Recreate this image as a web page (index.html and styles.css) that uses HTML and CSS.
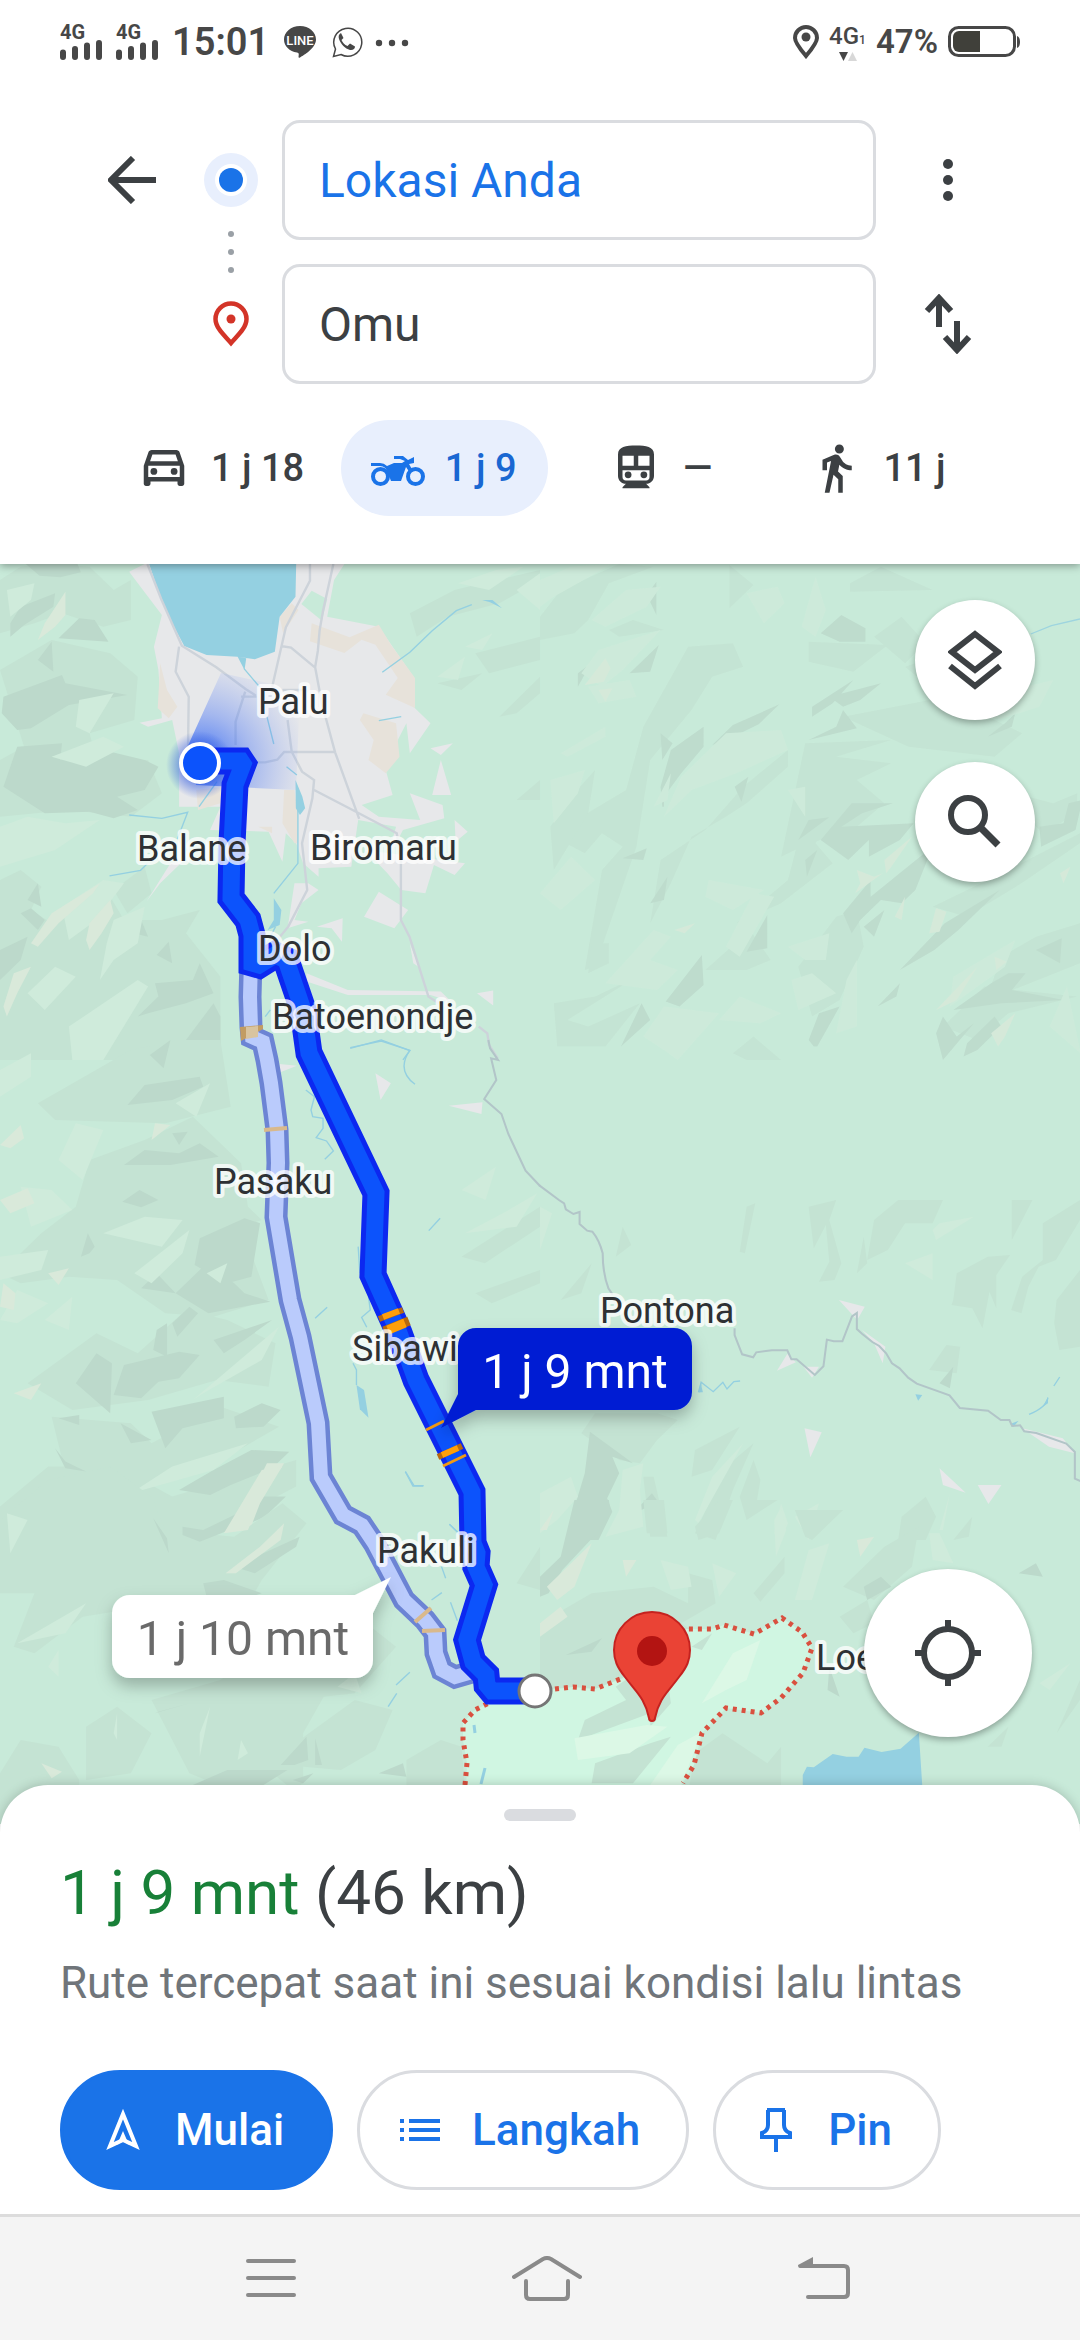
FILE: index.html
```
<!DOCTYPE html>
<html lang="id">
<head>
  <meta charset="UTF-8">
  <meta name="viewport" content="width=device-width, initial-scale=1.0">
  <title>Rute ke Omu</title>
  <link rel="stylesheet" href="styles.css">
</head>
<body>
  <!-- Status bar -->
  <div class="status-bar">
    <div class="status-group">
      <div class="signal">
        <span>4G</span>
        <svg width="44" height="20" viewBox="0 0 44 20"><path d="M3 12.500v4.500M15 9v8M27 5.500v11.500M39 3v14"/></svg>
      </div>
      <div class="signal">
        <span>4G</span>
        <svg width="44" height="20" viewBox="0 0 44 20"><path d="M3 12.500v4.500M15 9v8M27 5.500v11.500M39 3v14"/></svg>
      </div>
      <span class="clock">15:01</span>
      <svg class="app-icon" width="32" height="32" viewBox="0 0 32 32">
        <path fill="#474747" d="M16 0C7 0 0 6 0 13.500c0 6.500 5.500 12 13 13 2 .4 2 1.200 1.500 4.500 0 .6.500 1 1.500.5C20 29 32 22 32 13.500 32 6 25 0 16 0z"/>
        <text class="line-text" x="16" y="19" text-anchor="middle">LINE</text>
      </svg>
      <svg class="app-icon" width="32" height="32" viewBox="0 0 32 32">
        <path fill="none" stroke="#474747" stroke-width="1.500" d="M2.500 30.500l2-7.500A14 14 0 1 1 10 28.500z"/>
        <path fill="#474747" d="M10 7c-2 1-3 3-2 6 2 5.500 6 9.500 11 11 3 .5 5-1 5-3.500l-5-3-2.500 2.500c-3-1-5-3.500-6-6l2-2z"/>
      </svg>
      <svg width="34" height="32" viewBox="0 0 34 32" fill="#474747"><circle cx="4" cy="17" r="3.200"/><circle cx="17" cy="17" r="3.200"/><circle cx="30" cy="17" r="3.200"/></svg>
    </div>
    <div class="status-group status-right">
      <svg width="26" height="34" viewBox="0 0 26 34"><path fill="none" stroke="#474747" stroke-width="4" d="M13 31C8 25 2 18 2 13a11 11 0 0 1 22 0c0 5-6 12-11 18z"/><circle cx="13" cy="12" r="4.500" fill="#474747"/></svg>
      <div class="network">
        <span>4G<small>1</small></span>
        <svg width="20" height="9" viewBox="0 0 20 9"><path fill="#474747" d="M1 0h9L5.500 9z"/><path fill="#d8d8d8" d="M10 9h9L14.500 0z"/></svg>
      </div>
      <span class="battery-text">47%</span>
      <svg width="72" height="32" viewBox="0 0 72 32"><rect x="1.500" y="1.500" width="65" height="28" rx="9" fill="none" stroke="#474747" stroke-width="3"/><path fill="#40403a" d="M11 5h21v21H11a6 6 0 0 1-6-6v-9a6 6 0 0 1 6-6z"/><path fill="#474747" d="M69 10q3 1 3 6t-3 6z"/></svg>
    </div>
  </div>

  <!-- Directions header -->
  <header class="directions">
    <div class="search-row">
      <button class="icon-btn" aria-label="Kembali">
        <svg width="48" height="48" viewBox="0 0 48 48"><path class="stroke" d="M48 24H4M25 2L3 24l22 22"/></svg>
      </button>
      <div class="route-fields">
        <svg width="54" height="264" viewBox="0 0 54 264">
          <circle cx="27" cy="60" r="27" fill="#e8effd"/>
          <circle cx="27" cy="60" r="16" fill="#fff"/>
          <circle cx="27" cy="60" r="12" fill="#1a73e8"/>
          <g fill="#9aa0a6"><circle cx="27" cy="114" r="3"/><circle cx="27" cy="132" r="3"/><circle cx="27" cy="150" r="3"/></g>
          <path fill="none" stroke="#d33428" stroke-width="4.500" d="M27 223c-6-7-15.500-15-15.500-24a15.500 15.500 0 0 1 31 0c0 9-9.500 17-15.500 24z"/>
          <circle cx="27" cy="199" r="4.500" fill="#d33428"/>
        </svg>
        <div class="inputs">
          <input class="place-input origin" type="text" value="Lokasi Anda" aria-label="Titik awal">
          <input class="place-input" type="text" value="Omu" aria-label="Tujuan">
        </div>
      </div>
      <div class="side-actions">
        <button class="icon-btn" aria-label="Opsi lainnya">
          <svg width="48" height="48" viewBox="0 0 48 48" fill="#3c4043"><circle cx="24" cy="8" r="5"/><circle cx="24" cy="24" r="5"/><circle cx="24" cy="40" r="5"/></svg>
        </button>
        <button class="icon-btn" aria-label="Tukar awal dan tujuan">
          <svg width="48" height="60" viewBox="0 0 48 60"><path class="stroke" d="M15 33V5M3 17L15 4l12 13M33 27v28M21 43l12 13 12-13"/></svg>
        </button>
      </div>
    </div>

    <nav class="modes">
      <button class="mode">
        <svg width="54" height="54" viewBox="0 0 24 24"><path d="M18.920 5.010C18.720 4.420 18.160 4 17.500 4h-11c-.66 0-1.210.42-1.420 1.010L3 11v8c0 .55.45 1 1 1h1c.55 0 1-.45 1-1v-1h12v1c0 .55.45 1 1 1h1c.55 0 1-.45 1-1v-8l-2.080-5.990zM6.850 6h10.290l1.040 3H5.810l1.040-3zM19 16H5v-5h14v5z"/><circle cx="7.500" cy="13.500" r="1.500"/><circle cx="16.500" cy="13.500" r="1.500"/></svg>
        <span>1 j 18</span>
      </button>
      <button class="mode active">
        <svg width="54" height="54" viewBox="0 0 54 54">
          <circle cx="9.500" cy="35.500" r="7.500" fill="none" stroke="currentColor" stroke-width="4"/>
          <circle cx="44.500" cy="35.500" r="7.500" fill="none" stroke="currentColor" stroke-width="4"/>
          <path d="M0 22h9q4 0 7 3l7-3 8 0 3-2-5-2h-6v-3h9l5 4 6-3v6l-5 1 4 7-3 2-4-6-5 14H20l-3-8q-2-7-8-7L0 25z"/>
        </svg>
        <span>1 j 9</span>
      </button>
      <button class="mode">
        <svg width="54" height="54" viewBox="0 0 24 24"><path fill-rule="evenodd" d="M12 2c-4.420 0-8 .5-8 4v9.500C4 17.430 5.570 19 7.500 19L6 20.500v.5h12v-.5L16.500 19c1.930 0 3.500-1.570 3.500-3.500V6c0-3.500-3.580-4-8-4zM6 6.500h5V11H6zM13 6.500h5V11h-5zM6 13h12v3c0 1-.6 1.500-1.500 1.500h-9C6.600 17.500 6 17 6 16z"/><circle cx="8.500" cy="15" r="1.500"/><circle cx="15.500" cy="15" r="1.500"/></svg>
        <span>—</span>
      </button>
      <button class="mode">
        <svg width="54" height="54" viewBox="0 0 24 24"><path d="M13.500 5.500c1.100 0 2-.9 2-2s-.9-2-2-2-2 .9-2 2 .9 2 2 2zM9.800 8.900L7 23h2.100l1.800-8 2.100 2v6h2v-7.500l-2.100-2 .6-3C14.800 12 16.800 13 19 13v-2c-1.900 0-3.500-1-4.300-2.400l-1-1.600c-.4-.6-1-1-1.700-1-.3 0-.5.1-.8.1L6 8.300V13h2V9.600l1.800-.7"/></svg>
        <span>11 j</span>
      </button>
    </nav>
  </header>

  <!-- Map -->
  <main class="map">
    <svg class="map-canvas" viewBox="0 564 1080 1260" preserveAspectRatio="xMidYMid slice" role="img" aria-label="Peta rute Palu ke Omu">
      <defs>
        <radialGradient id="beam" gradientUnits="userSpaceOnUse" cx="200" cy="763" r="110">
          <stop offset="0" stop-color="#0c4df5" stop-opacity=".8"/>
          <stop offset=".45" stop-color="#3f6ef5" stop-opacity=".4"/>
          <stop offset="1" stop-color="#7090f5" stop-opacity="0"/>
        </radialGradient>
        <radialGradient id="glow" gradientUnits="userSpaceOnUse" cx="200" cy="765" r="34">
          <stop offset=".5" stop-color="#2a55e0" stop-opacity=".6"/>
          <stop offset="1" stop-color="#2a55e0" stop-opacity="0"/>
        </radialGradient>
        <filter id="shadow" x="-20%" y="-30%" width="140%" height="180%">
          <feDropShadow dx="0" dy="8" stdDeviation="8" flood-color="#000" flood-opacity=".25"/>
        </filter>
      </defs>

      <rect y="500" width="1080" height="1400" fill="#c8ead9"/>

      <!-- relief, north west -->
      <g transform="translate(0 560) scale(.3444 .3333)">
        <path class="t-mid" d="M0 60L60 20 140 10 260 20 330 90 380 60 380 180 300 200 180 160 100 190 0 220zM0 330L150 240 320 280 400 350 390 480 260 520 280 600 430 600 470 700 380 770 200 750 0 770 0 600 70 560zM0 960L60 930 120 980 90 1050 150 1090 320 1010 360 1080 470 1080 580 1050 540 1120 640 1250 640 1500 0 1500zM330 990L420 920 440 1000 370 1060z"/>
        <path class="t-dark" d="M75 12h150l10 25-60 15-60-5zM30 190L60 140 160 100 155 140 70 195 30 230zM170 235L230 175 275 180 315 245zM110 300L150 245 155 335zM5 460L10 410 180 345 190 370 370 405 200 435 90 505 50 510zM10 680L50 560 180 550 175 600 260 560 420 600 460 620 420 690 340 710 400 750 330 775 260 755 130 760zM80 1020L110 970 120 1040zM60 1060L90 1045 130 1080 110 1110zM0 1170L80 1130 60 1200 0 1260zM345 1095L410 1080 430 1130 370 1115zM455 1185L490 1145 500 1210zM400 1370L460 1310 450 1270 560 1260 580 1210 620 1300 540 1330 430 1360zM540 1440L620 1330 640 1370 640 1500 500 1500z"/>
        <path class="t-light" d="M20 90L100 70 90 120 30 170zM230 420L330 400 260 520 220 500zM150 590L300 530 360 560 250 620zM0 800L80 770 190 790 290 780 160 870 0 920zM180 1040L300 960 360 970 280 1080 200 1140zM330 1080L420 1040 400 1150 330 1200 290 1260 310 1150zM80 1300L160 1220 220 1250 130 1350zM200 1400L400 1260 430 1280 300 1500 210 1500z"/>
        <path class="t-sand" d="M110 240L130 190 190 95 190 165 160 200zM90 1150L150 1060 290 970 270 1000 170 1090 110 1160zM250 1140L260 1090 320 1020 330 1060 295 1120 260 1170zM10 1340L40 1240 90 1220 50 1300 20 1370z"/>
        <path class="t-mid" d="M1190 160L1320 90 1400 70 1568 30 1568 60 1450 130 1300 170 1210 230zM1380 280L1568 230 1568 300 1420 340zM1270 370L1400 340 1340 390zM1450 470L1568 350 1568 400 1500 460zM1500 720L1568 660 1568 720z"/>
        <path class="t-light" d="M1330 70L1440 30 1520 20 1420 90zM1350 260L1430 220 1400 270zM1270 350L1350 290 1330 360zM1500 90L1568 40 1568 150z"/>
      </g>

      <!-- Palu urban area -->
      <g transform="translate(0 560) scale(.3444 .3333)">
        <path class="city" d="M375 35L420 12H1000L970 60 950 170 1100 200 1200 350 1190 430 1250 490 1190 580 1180 490 1155 540 1120 630 1140 705 1050 735 1100 770 1220 780 1190 700 1285 735 1290 775 1170 810 1120 910 1150 800 1040 780 1020 920 925 925 925 950 880 910 860 850 830 820 820 905 780 815 610 810 640 740 520 740 520 580 500 480 430 500 405 488 470 475 460 330 447 260 470 165z"/>
        <path class="city" d="M1250 565l65-15-35 35zM1280 600l30 105h-55zM1320 780l38 35-35 30zM1100 995l85 55-40 55-88-35zM1060 870l290 40-30 35-60-30-25 85-70-10-40-50zM855 970l40 0 30 20-50 40-20 50 40 5-60 20zM920 1100l75-25-2 70-30-40zM890 1240l120 50 270 5 30 30-60-20-240 0-120-40zM1385 1300l47-8v45zM1190 1150l10 60 15 10zM425 1025l70-115 40-10-70 70z"/>
        <path class="urban-sand" d="M905 190l110 42 85-38 35 60 70 100 0 90-85-40 35-50-65-100-40-15-50 40-100-35zM1055 460l95 30 10 100-40 50-50-40 15-60-40-60zM465 310l20 80 30 50-25 35-32-30zM825 690l30 0 10 70 0 90-10 0-35-60zM570 690l80-10-10 50-65 20zM750 800l40 0 0 20zM812 170l35-40 20 20-45 70z"/>
        <path fill="#c8ead9" d="M905 92l45 25-15 65-60-50z"/>
        <path class="water" d="M433 12H860L858 110 812 170 798 275 740 298 690 290 600 285 535 258 500 190 462 100zM690 290l25 5-5 35z"/>
        <path class="river" d="M708 325l45 55M775 470l20 82M832 620l30 25 M865 740v170l-35 45-35 45M630 665l-52 75M375 765l95 10 75-18-30 80M318 948l90-17 20-20M1110 337l80-60 65-65 70-60 45-18M1100 482l65-12M800 1100l-30 60M770 1370l15-20M1017 1465l90-25 83 32-20 28"/>
        <path class="water" d="M1400 120l30 0 28 25-35-18zM858 660l20 50 8 35-15 20-12-20zM795 1015l22 35-5 45-35 15 18-30zM530 790l10-10z"/>
        <path class="road" d="M428 12l40 105 60 140 100 65 85 65 30 20M520 260l-10 75 38 75-2 150M712 395l-28 90v70M900 12v50l-50 100-20 40-40 180M968 12l-30 140-10 60-5 60-8 50 20 110 38 145 70 200M815 258l30 5 70 60M835 480l12 95 30 60 35 25-5 55-30 135 15 140-55 110-40 50M740 607h30l35-8 20-23h148M912 690l130 70 110 60 12 80v180l25 50 55 180 30 20M1390 1400l25 20 5 35 25 40M700 410h45M820 390h70"/>
      </g>

      <!-- relief, north east -->
      <g transform="translate(540 560) scale(.3444 .3333)" opacity=".8">
        <path class="t-mid" d="M0 170L60 90 230 12 330 20 200 70 140 180 100 220 0 240zM200 210L270 180 360 210 230 230zM430 260l130-10 30 70-90 30-60 100-120 150-40 260-120 360-30 10 50-300 60-70-60-40-50 60-90-50 80-60 130-80 50-190zM550 15l70 60-70 70zM900 70l90-50 150 70-240 5zM780 245l230 10-100 80-130-30zM970 230l80-60 70 80-60 60zM770 550l250-10-160 50 160 20-100 50 80 70-80 70-160 60-60 30zM590 680l130-110 0 50-120 110-60 40-100 60-60 140-60 120 30-190 130-90zM570 1090l150-130 50-200 110-40-80 130 50 60-150 120zM860 1070l60-20 20 110-70 160-80 50-40-150zM1140 1040l160-80 268-140v30l-170 120-160 100zM1060 320l170-60 80 100-180 20zM880 470l300-60 220 110-80 70-250-30z"/>
        <path class="t-mid" d="M30 800l60-90 70-80-20 130-100 170zM150 1150l50 0 0 60-60 30zM40 1330l120-20 120-60-200 130 60 20 150-70-100 130-140 0zM1340 1190l100-60 128-40v120l-220 90-50 10zM560 1480l60-50 80 70-100 0zM1170 1400l120-120 270 30-200 50-90 80zM480 1230l130-120 60 90-70 30zM1380 700l110 30 70-30v60l-100 60-40-40z"/>
        <path class="t-dark" d="M310 105l28-40 0 100zM815 220l60-55 70 40 0 40h-75zM350 680l30-110 95-70 0 60-65 80-50 70v30h-5zM500 555l60-60 135-62-60 60-80 40zM790 440l120-80-60 70-60 40zM880 450l40 55-140 35 80-40zM840 410l150-40-60 50-50 20zM260 340l85-85-25 80zM110 340l38-30-38 70zM240 895l70-30-10 35zM320 1030l50-80-10 70zM600 1175l60-110 0 100zM365 1325l105-140 5 90-70 65zM235 1460l60-130 25 50zM750 840l30-60 60-8zM815 840l90-110 120 0-90 30-60 40 210-10-40 50-90 50 0-50-60 60zM880 1060l80-100 0 50 120-100 60-50-50 130-40 40-60-10-60 60-25 40zM940 1100l60-50-30 80zM1045 1230l130-140 160-100-120 120-70 60zM1440 1170l75-35-5 75zM1310 1270l50-30 50 0-40 50 150 30-180 10-140 20zM980 1340l65-70-10 40zM780 1440l30-80 60-20-65 120-10 0zM1150 1420l20-50 40 60 50-40-90 110zM1240 1450l80-80 20 30-70 70-40 20zM1300 530l50-40 30-30-10 40zM565 680l40-30-20 75zM770 900l35-30-30 80zM1450 800l70-10 15-60 40-10-20 90-100 50zM350 520l35 30-30 50z"/>
        <path class="t-light" d="M0 60L90 20 210 12 40 110 0 140zM150 180l100-90 100-10-40 60-120 60zM600 100l90-20 20 50-60 60zM760 200l40-150 30 100-30 80zM170 270l180-60-110 120-60 50-60-40zM140 380l120-20 20 50-110 20zM540 520l160-10 20 60-150 70-130 50-80 80 50-120zM60 580l130-80 0 30-110 60zM30 660l100-30-20 70-70 90zM0 1000l90-110 70 70-100 90zM330 740l50-100-10 80zM490 960l160 30-90 60-80-40zM190 1270l140-160 50 20-60 70 80 30-60 60zM620 1000l60 10-100 180-40-30zM720 1160l120-40-10 80-60 0zM730 1260l60-20 70 60-110 50zM520 1380l60-70 120 50-60 30zM300 1430l60-90 160 20-120 140-40-30zM1200 1250l180-110-30 80-160 120zM720 690l50-10 0 90zM890 1260l30-60 0 200-60 20zM1330 400l160-40-40 80-120 40zM1290 480l30-70 40 60zM1480 1400l50-120 40 200z"/>
        <path class="t-sand" d="M130 375l60-80 15 30-20 40zM170 390l40-5-20 40zM920 930l10 40-15 30 80-60-25 10zM1000 900l80-70-60 90-15 20zM1030 1070l30-60-10 70zM1130 1120l20-75 30 10-20 60zM1320 1190l35 15-30 25zM1150 1350l120-130-60 100zM1310 1420l70-60-30 70-20 30zM1510 940l30-20-20 50zM390 1110l60-20-30 30z"/>
        <path class="river" d="M1425 222l60-25 83-20"/>
      </g>

      <!-- relief, west -->
      <g transform="translate(0 1040) scale(.3444 .3333)">
        <path class="t-mid" d="M110 190L380 30 520 0 640 0 670 200 480 250 160 240zM0 700L120 580 220 500 260 360 420 300 560 230 700 370 720 500 760 540 700 560 780 780 620 830 480 820 340 720 200 710 60 730zM80 1030l200-150 120 60 140-130 120 30 140 70-20 130-150-20-200 60-220 30zM150 1130l230 20 60 60 200-110 170 60-200 120-180 60-230 0zM0 1400l140-120 200 0 160 90 360-110 0 80-300 160-560 0z"/>
        <path class="t-dark" d="M370 195l50-60 160-25 10 30-90 40zM435 45l60-45-20 85zM360 375l60-45 100 10 60-30 55 40-140 25zM500 280l45-5-25 40zM355 485l50-35 55 30-50 22zM235 650l20-70 20 40-15 20zM565 675l15-80 130-60 45 15-25 160-70 20zM410 745l45-45 55 60zM510 760l90-90 80 60 30 30 75 25-180 35zM220 1030l60-90 45 30-5 150zM330 1065l30-90 160-40 60 10-60 70-60 10-50 50zM440 1115l210-45 0 65-120 30-50 60zM350 1150l90 50-60 10zM170 1135l60-10 0 30zM680 1130l80-40 55 20-50 50-80 5zM160 1225l30 40 60 30-60-10zM455 870l30-20 0 100-40-20zM500 850l50-50 25 20-60 70zM620 900l170-60-80 60-60 40zM520 1350l100-60 110-60 110 5-50 50-120 50-60 30zM660 1450l100-80 70 0-60 60-90 40z"/>
        <path class="t-light" d="M0 90l90-50 0 70-90 60zM170 360l50-110 80 20-60 150zM60 440l90 10 60 60-120 50zM300 580l120-50 110 10-60 80zM390 700l160-130-20 70-90 90zM0 650l140-20-20 60-120 30zM130 840l80-70-10 100zM600 700l60-30-20 60zM560 1080l250-220-50 100-170 100zM380 1360l120-80 220-70-100 80zM510 190l100-60-40 100zM0 840l50-90 90 40-90 60zM240 1380l70-60 40 100-60 20z"/>
        <path class="t-sand" d="M0 315l60-60 10 40-40 30zM440 300l10-50 45 5zM0 480l80-35 20 45-70 30zM0 800l10-70 35 30-5 50zM40 1060l80-30-30 50zM140 700l60-15-30 50zM685 1460l90-190 50 0-70 120-30 80zM335 1380l15-60 5 80-10 20zM760 1500l60-90-20 80z"/>
        <path class="t-mid" d="M1340 650l228-150 0 60-160 110zM1380 760l188-70v40l-140 60z"/>
        <path class="t-light" d="M1350 580l110-60 100-60-60 100zM1340 450l100-70-30 100z"/>
        <path class="city" d="M812 72l50 5-48 20zM1090 100l45 30-30 50zM1303 197l98-10-3 35z"/>
        <path class="river" d="M1017 23l90-20 83 28q-40 60 15 102M888 150l25 20-10 40 5 20 30 5v30l-20 28 30 10 20 30-25 25M1245 572l33-37M915 835l35-33M1040 620l5 80M1070 770l5 40-25 22 15 30M1025 970l10 20v45M1177 1295l25 42h28M1305 1453l30 30"/>
        <path class="water" d="M1035 1035l22 15 13 83-25-25z"/>
        <path class="road-thin" d="M1418 0l5 25 23 35-20-5 15 65-35 57 50 45 20 60 50 110 42 46"/>
      </g>

      <!-- relief, east -->
      <g transform="translate(540 1200) scale(.3444 .3333)">
        <path class="t-mid" d="M600 20l25-10-30 150-15-5zM780 20l80-20-20 60 35 130-20 50-45 5 30-60-10-110-35 70zM970 60l70-60 130 0-30 70-80 0-50 80-60 30zM1200 300l10-80 90-50 65-5-40 60 0 100-20-50-20 110-30-60-60-10zM1400 230l60-50 0-110 108-70v60l-70 120-50 20-30 60-20 80-30-10zM920 220l20-110 10 80zM1500 300l68-90v230l-60 10-15-80zM220 170l20-90 25 55zM1370 0l60 0-60 120zM120 700l40-60 180 0 60 20-60 60-50 70-60-10zM450 750l130-70-80 130-60 20zM450 1000l90-200 80-70-60 140-50 150zM580 890l40-110 20 60-10 60 60 0-90 60zM60 300l90-110-30 90zM1130 510l50-75 40 5-10 80zM1050 950l70-60 30 60-30 70h-80zM300 830l30 0 40 180h-50z"/>
        <path class="t-dark" d="M145 695l125 95-60-20 20 50-35 75 15 40-40 85h-70l-2-90 32-110zM265 945l60-65 18 25zM1160 550l40-50-10 65z"/>
        <path class="t-light" d="M0 20l35 20-35 110zM1160 70l100-20-110 70-10-30zM1060 190l80-30 0 80zM240 810l60-20-10 80 10 110-110 30 40-80zM500 830l90-100-130 240-10-10zM680 1000l20-90 20 60-20 50zM740 950l70-40-30 110zM0 880l90-50 20 60-60 70-50 40zM1160 990l30-110-20 110z"/>
        <path class="city" d="M868 300l75 20-22 40zM935 390l68 50-8 50-25-60zM688 512l30-50 25 25zM765 500l45 0-20 33zM768 685l50 12-33 75zM1160 805l76 73-66-23zM1271 855h69l-38 57zM1400 685l118 30 35 45-75-20z"/>
        <path class="river" d="M463 577l5-30 35 28 28-28 12 20 20-22 18-2M1420 643q50-20 55-50M1492 558l17-27"/>
        <path class="water" d="M1090 583l20 2-12 17zM1365 672l25-10-15 18zM458 577l8-30 7 30zM1460 620l15-30v20z"/>
        <path class="road-thin" d="M-2-44L55 0l15 10 5 18 22 14 18-6v36l22 20 15 3q20 25 30 65 0 60 17 106l12 18M565 385v20l22 58 32 9 9-15 45-6h45l12 27h15l53 47 25-26 10-80 20 5h25l28-75 14-10v48l15 14 30 25 20 12 20 22 17 30 22 15 25 28 25 18 95 35 30 38 82 8 37 28h25l8 18 23-2 12 18 35 5 87 32 25 25v80l18 8"/>
      </g>

      <!-- relief, south west -->
      <g transform="translate(0 1440) scale(.3444 .3333)">
        <path class="t-mid" d="M0 240l140-120 180-40 120 90 40 100 200 20 140-100 70 60-130 170-60 110-200 30-80-60-180 30-140 110-60-20 60-160-100 0zM440 780l200-60 150-110 250-80 110 90-120 140-90 10-60 110 0 150-30 20-70-60-110 60-120-50-60-120zM870 900l160-120 110 30-50 120-100 60-110-10zM250 860l90-60 100 80-60 120-130 20zM0 1000l60-100 110 20 60 100 0 60-230 100zM1180 960l100-60 60 20 10 120h-170zM1500 430l68-110 0 130z"/>
        <path class="t-dark" d="M445 235l40 60 5 45zM530 260l60 10 120-60-20 50-110 45-50-20zM680 380l190-90-10 30-120 80zM590 430l60-10 110 40-60 20-100-10zM815 975l75-85 5 70-40 15zM915 975l0-80 20 80zM560 1035l100-45h175l-70 45zM850 1020l60-20-30 30zM1100 1000l70-30 10 40zM450 820l100-30-90 25z"/>
        <path class="t-light" d="M20 220l60 20-50 100zM50 610l200-120-60 90zM140 680l30-50 0 80zM580 880l30-80-30 150zM690 960l10-60 20 40zM330 880l10-60 0 80zM980 740l50-40 20 60z"/>
        <path class="t-sand" d="M650 280l110-190 60-10-50 60-50 130zM655 400l100-80 70-70-10 50-130 100zM120 970l60 25-30 20z"/>
        <path class="river" d="M1177 95l22 43h30M1305 253l35 35M1282 380l12 35M1253 480l30-22M1308 487l20 55M1150 735l40-38M1127 800l25-40"/>
      </g>

      <!-- relief, south east -->
      <g transform="translate(540 1500) scale(.3444 .3333)">
        <path class="t-mid" d="M0 370l150-90 180-20 100 50 0-90 70 20 10 70-100 60 150 100-120 90-250 20-190-20zM620 280l90-110 0 50-70 85zM880 260l120-120 100-60-20 120-110 100zM740 30l140 0-90 90-20-10zM450 760l80-60 130 90 40-50 0 140h-270zM870 350l80-50 20 70-60 30zM1200 120l55-70-10 60zM1300 740l60-60-20 60zM1500 700l68-160v60zM300 0l60 0 10 100-60 0zM450 80l70-80 40 0-40 100-60 20z"/>
        <path class="t-dark" d="M100 0h100l5 40-40 60-100 110-40 70-25 10V230l60-60zM75 465l105-50-30 40zM940 260l50-30 30 30-70 40zM1390 220l50-30 20 40zM840 500l30 90-35-20z"/>
        <path class="t-sand" d="M20 260l130-130-50 130-50 40zM0 370l60-50 20 30-80 60zM920 120l50-10-40 60zM240 180l40 0-30 50zM0 90l40-60-20 60z"/>
        <path class="t-light" d="M350 180l80 20 10 60-60 10zM680 60l20-40 15 70-30 80zM780 150l60-20-50 170-50 0zM500 190l70 30-50 70zM1130 100l30 0 40 90-60-10zM1450 550l90-60-60 80z"/>
      </g>

      <!-- Omu boundary -->
      <path fill="#d0f6e2" d="M489 1703l-14 7-12 13v17l4 23-2 61h200l18-41 11-18 8-32 24-25 35 5 20-15 22-25 9-25-10-16-20-14-28 16-30-9-12 4-26 0-15 20-48 29-28 11-22-2-18 2-40 6z"/>
      <g transform="translate(540 1500) scale(.3444 .3333)">
        <path class="t-mid" d="M320 680l60-70-10-80-80-20-70 50 30 40-120 60-20 60 210-80zM160 790l160-60 60-20-110 140h-120zM440 440l60-40-30 50z"/>
        <path fill="#dcf8e6" d="M100 715l210-40 60 5-110 80-150 20zM470 610l90-150 80-40-40 120-60 30zM320 855l80-120 70-40-60 160z"/>
        <path class="water" d="M763 855v-30l12-25 20 2 55-40 40 8 35 0 17-27 50 13 55-10 53-48 10 160z"/>
      </g>
      <path class="boundary" d="M465 1785l2-22-4-23v-17l12-13 14-7M555 1689l18-2 22 2 28-11 63-49h26l12-4 30 9 28-16 20 14 10 16-9 25-22 25-20 15-35-5-24 25-8 32-11 18"/>
      <path class="river-abs" d="M485 1768l-4 16M474 1725l1 8"/>

      <!-- location beam -->
      <path fill="url(#beam)" d="M186 750L221 673 300 690 296 790 196 785z"/>
      <circle cx="200" cy="765" r="34" fill="url(#glow)"/>

      <!-- alternative route -->
      <path class="alt-edge" d="M251 960L250 997 251 1027 252 1037 263 1042 267 1060 271 1083 277 1130 278 1163 276 1217 290 1300 300 1337 318 1423 321 1477 343 1515 362 1525 374 1543 404 1600 425 1620 435 1633 436 1653 442 1670 455 1677 472 1672"/>
      <path class="alt-fill" d="M251 960L250 997 251 1027 252 1037 263 1042 267 1060 271 1083 277 1130 278 1163 276 1217 290 1300 300 1337 318 1423 321 1477 343 1515 362 1525 374 1543 404 1600 425 1620 435 1633 436 1653 442 1670 455 1677 472 1672"/>
      <path fill="#c29c62" d="M240 1027l23-2v4l-22 12z"/>
      <path fill="#d9c49f" d="M246 1027l12-1v11l-12 2z"/>
      <path stroke="#d9b98c" stroke-width="4" d="M264 1130l23-2M415 1622l16-14M422 1631l23-1"/>

      <!-- main route -->
      <path class="route-edge" d="M200 761H241L243 764 235 785 232 843 231 898 248 920 252 935 252 963 259 965 275 955 286 960 303 1010 309 1053 376 1193 373 1275 399 1333 416 1380 472 1492 473 1543 477 1553 476 1567 484 1585 467 1640 473 1662 486 1675 487 1685 492 1691H535"/>
      <path class="route-fill" d="M200 761H241L243 764 235 785 232 843 231 898 248 920 252 935 252 963 259 965 275 955 286 960 303 1010 309 1053 376 1193 373 1275 399 1333 416 1380 472 1492 473 1543 477 1553 476 1567 484 1585 467 1640 473 1662 486 1675 487 1685 492 1691H535"/>
      <path stroke="#b8690f" stroke-width="6" d="M379 1319l24-9M438 1457l24-11"/>
      <path stroke="#b8690f" stroke-width="9" d="M384 1331l25-10"/>
      <path stroke="#ff9f0a" stroke-width="6" d="M383 1317l16-6M442 1455l16-7"/>
      <path stroke="#ff9f0a" stroke-width="9" d="M388 1330l17-7"/>
      <path stroke="#f09a14" stroke-width="3" d="M426 1430l18-9M443 1466l23-11"/>

      <circle cx="200" cy="763" r="19" fill="#0c53fc" stroke="#fff" stroke-width="4"/>
      <circle cx="535" cy="1691" r="16" fill="#fff" stroke="#757575" stroke-width="3"/>

      <!-- destination pin -->
      <path fill="#ea4335" stroke="#c5221f" stroke-width="2" d="M652 1721c-2 0-3-1-3-3-4-20-13-26-24-41-8-10-11-17-11-27a38 38 0 0 1 76 0c0 10-3 17-11 27-11 15-20 21-24 41 0 2-1 3-3 3z"/>
      <circle cx="652" cy="1651" r="15" fill="#b31412"/>

      <!-- place names -->
      <g class="place">
        <text x="258" y="714">Palu</text>
        <text x="137" y="861">Balane</text>
        <text x="310" y="860">Biromaru</text>
        <text x="258" y="961">Dolo</text>
        <text x="272" y="1029">Batoenondje</text>
        <text x="214" y="1194">Pasaku</text>
        <text x="352" y="1361">Sibawi</text>
        <text x="600" y="1323">Pontona</text>
        <text x="377" y="1563">Pakuli</text>
        <text x="816" y="1670">Loe</text>
      </g>

      <!-- travel time callouts -->
      <g class="callout callout-main" filter="url(#shadow)">
        <path d="M476 1328H674a18 18 0 0 1 18 18V1392a18 18 0 0 1-18 18H476L441 1428 458 1394V1346a18 18 0 0 1 18-18z"/>
        <text x="575" y="1388" text-anchor="middle">1 j 9 mnt</text>
      </g>
      <g class="callout callout-alt" filter="url(#shadow)">
        <path d="M130 1595H355L391 1577 373 1613V1660a18 18 0 0 1-18 18H130a18 18 0 0 1-18-18V1613a18 18 0 0 1 18-18z"/>
        <text x="243" y="1655" text-anchor="middle">1 j 10 mnt</text>
      </g>
    </svg>

    <div class="map-tools">
      <button class="round-btn" aria-label="Lapisan peta">
        <svg width="54" height="60" viewBox="0 0 54 60"><path class="stroke" d="M27 4L50 22 27 40 4 22zM2 36l25 20 25-20"/></svg>
      </button>
      <button class="round-btn" aria-label="Telusuri di sepanjang rute">
        <svg width="54" height="54" viewBox="0 0 54 54"><circle class="stroke" cx="20" cy="20" r="17"/><path class="stroke stroke-thick" d="M33 33l17 17"/></svg>
      </button>
    </div>
    <button class="round-btn recenter" aria-label="Lokasi saya">
      <svg width="66" height="66" viewBox="0 0 66 66"><circle class="stroke" cx="33" cy="33" r="24"/><path class="stroke" d="M33 0v10M33 56v10M0 33h10M56 33h10"/></svg>
    </button>
  </main>

  <!-- Bottom sheet -->
  <section class="sheet">
    <div class="handle"></div>
    <h1 class="summary"><span>1 j 9 mnt</span> (46 km)</h1>
    <p class="note">Rute tercepat saat ini sesuai kondisi lalu lintas</p>
    <div class="actions">
      <button class="pill pill-primary">
        <svg width="54" height="54" viewBox="0 0 54 54"><path fill="none" stroke="currentColor" stroke-width="4" d="M27 11L14 43l13-6 13 6z"/><path fill="currentColor" d="M27 28l6 14-6-4-6 4z"/></svg>
        Mulai
      </button>
      <button class="pill">
        <svg width="54" height="54" viewBox="0 0 54 54"><path fill="none" stroke="currentColor" stroke-width="4" d="M16 18h31M16 27h31M16 36h31M7 18h4M7 27h4M7 36h4"/></svg>
        Langkah
      </button>
      <button class="pill">
        <svg width="54" height="54" viewBox="0 0 54 54"><path fill="none" stroke="currentColor" stroke-width="4" d="M18 7h18M19 7v15q0 6-6 8v4h28v-4q-6-2-6-8V7M27 34v15"/></svg>
        Pin
      </button>
    </div>
  </section>

  <!-- System navigation -->
  <nav class="system-nav">
    <button aria-label="Menu"><svg width="50" height="42" viewBox="0 0 50 42"><path d="M2 3h46M2 20h46M2 37h46"/></svg></button>
    <button aria-label="Beranda"><svg width="70" height="46" viewBox="0 0 70 46"><path d="M2 21L31 3q4-2 8 0l29 18M14 25v14q0 4 4 4h34q4 0 4-4V25"/></svg></button>
    <button aria-label="Kembali"><svg width="52" height="44" viewBox="0 0 52 44"><path d="M10 9h36q4 0 4 4v23q0 4-4 4H10"/><path class="nav-tip" d="M0 8L15 0v11H2q-2 0-2-3z"/></svg></button>
  </nav>
</body>
</html>
```

FILE: styles.css
```
* {
  box-sizing: border-box;
}
body {
  margin: 0;
  min-height: 100vh;
  display: flex;
  flex-direction: column;
  font-family: Roboto, "Noto Sans", sans-serif;
  color: #3c4043;
  background-color: #fff;
}
button {
  border: none;
  background: none;
  padding: 0;
  font-family: inherit;
  color: inherit;
  cursor: pointer;
}
svg {
  display: block;
  flex-shrink: 0;
}
.stroke {
  fill: none;
  stroke: #3c4043;
  stroke-width: 6;
}
.stroke-thick {
  stroke-width: 7;
}

/* Status bar */
.status-bar {
  position: relative;
  z-index: 2;
  display: flex;
  justify-content: space-between;
  align-items: center;
  height: 84px;
  padding: 0 60px;
  color: #474747;
  background-color: #fff;
}
.status-group {
  display: flex;
  align-items: center;
  gap: 12px;
}
.status-right {
  gap: 10px;
}
.signal span {
  display: block;
  font-size: 20px;
  line-height: 16px;
  font-weight: 700;
}
.signal path {
  stroke: #474747;
  stroke-width: 6;
  stroke-linecap: round;
}
.clock {
  font-size: 38px;
  line-height: 48px;
  font-weight: 600;
}
.app-icon {
  margin-left: 3px;
}
.line-text {
  font-size: 13px;
  font-weight: 500;
  fill: #fff;
}
.network {
  display: flex;
  flex-direction: column;
  align-items: center;
}
.network span {
  font-size: 24px;
  line-height: 24px;
  font-weight: 500;
}
.network small {
  font-size: 12px;
}
.battery-text {
  font-size: 33px;
  line-height: 40px;
  font-weight: 600;
}

/* Directions header */
.directions {
  position: relative;
  z-index: 1;
  padding: 36px 0 48px;
  background-color: #fff;
  box-shadow: 0 2px 8px rgba(0, 0, 0, 0.35);
}
.search-row {
  display: flex;
  gap: 48px;
  padding: 0 108px;
}
.icon-btn {
  display: flex;
  align-items: center;
  justify-content: center;
  width: 48px;
  height: 120px;
}
.route-fields {
  display: flex;
  flex: 1;
  gap: 24px;
}
.inputs,
.side-actions {
  display: flex;
  flex-direction: column;
  gap: 24px;
}
.inputs {
  flex: 1;
}
.place-input {
  width: 100%;
  height: 120px;
  padding: 0 34px;
  border: 3px solid #dadce0;
  border-radius: 18px;
  font-family: inherit;
  font-size: 48px;
  color: #3c4043;
}
.origin {
  color: #1a73e8;
}
.modes {
  display: grid;
  grid-template-columns: repeat(4, 1fr);
  justify-items: center;
  padding: 0 93px 0 107px;
  margin-top: 36px;
}
.mode {
  display: flex;
  align-items: center;
  gap: 20px;
  height: 96px;
  padding: 0 32px 0 30px;
  border-radius: 48px;
  font-size: 38px;
  font-weight: 500;
  white-space: nowrap;
}
.mode svg {
  fill: currentColor;
}
.mode.active {
  background-color: #e8effd;
  color: #1a73e8;
}
.mode.active span {
  color: #1967d2;
}

/* Map */
.map {
  position: relative;
  flex: 1;
  min-height: 600px;
  background-color: #c8ead9;
}
.map-canvas {
  position: absolute;
  width: 100%;
  height: 100%;
}
.t-dark {
  fill: #bcd9cb;
}
.t-mid {
  fill: #c4e3d3;
}
.t-light {
  fill: #cfebdb;
}
.t-sand {
  fill: #d9e9da;
}
.city {
  fill: #e7e8ea;
}
.urban-sand {
  fill: #e7e2da;
}
.water {
  fill: #94d0e1;
}
.river {
  fill: none;
  stroke: #94d0e1;
  stroke-width: 4;
}
.river-abs {
  fill: none;
  stroke: #94d0e1;
  stroke-width: 3;
}
.road {
  fill: none;
  stroke: #cdd3da;
  stroke-width: 7;
}
.road-thin {
  fill: none;
  stroke: #b2c5c8;
  stroke-width: 6;
}
.boundary {
  fill: none;
  stroke: #d9503f;
  stroke-width: 5;
  stroke-dasharray: 4 5;
}
.alt-edge,
.alt-fill,
.route-edge,
.route-fill {
  fill: none;
}
.alt-edge {
  stroke: #6c84d4;
  stroke-width: 23;
}
.alt-fill {
  stroke: #bacbfc;
  stroke-width: 14;
}
.route-edge {
  stroke: #0c28f0;
  stroke-width: 27;
}
.route-fill {
  stroke: #0c53fc;
  stroke-width: 17;
}
.place {
  font-size: 36px;
  fill: #2e3134;
  stroke: rgba(255, 255, 255, 0.75);
  stroke-width: 8;
  stroke-linejoin: round;
  paint-order: stroke;
}
.callout text {
  font-size: 48px;
}
.callout-main {
  fill: #041fd3;
}
.callout-main text {
  fill: #fff;
}
.callout-alt {
  fill: #fff;
}
.callout-alt text {
  fill: #6a6a6a;
}
.map-tools {
  position: absolute;
  top: 36px;
  right: 45px;
  display: flex;
  flex-direction: column;
  gap: 42px;
}
.round-btn {
  display: flex;
  align-items: center;
  justify-content: center;
  width: 120px;
  height: 120px;
  border-radius: 50%;
  background-color: #fff;
  box-shadow: 0 3px 6px rgba(0, 0, 0, 0.3);
}
.recenter {
  position: absolute;
  right: 48px;
  bottom: 87px;
  width: 168px;
  height: 168px;
}

/* Bottom sheet */
.sheet {
  position: relative;
  margin-top: -39px;
  padding: 24px 60px;
  border-radius: 48px 48px 0 0;
  background-color: #fff;
  box-shadow: 0 0 12px rgba(0, 0, 0, 0.2);
}
.handle {
  width: 72px;
  height: 12px;
  margin: 0 auto;
  border-radius: 6px;
  background-color: #dadce0;
}
.summary {
  margin: 34px 0 28px;
  font-size: 62px;
  line-height: 76px;
  font-weight: 400;
}
.summary span {
  color: #188038;
}
.note {
  margin: 0;
  font-size: 44px;
  line-height: 48px;
  color: #70757a;
}
.actions {
  display: flex;
  gap: 24px;
  margin-top: 63px;
}
.pill {
  display: flex;
  align-items: center;
  gap: 25px;
  height: 120px;
  padding: 0 46px 0 33px;
  border: 3px solid #dadce0;
  border-radius: 60px;
  font-size: 44px;
  font-weight: 500;
  color: #1a73e8;
}
.pill-primary {
  border-color: #1a73e8;
  background-color: #1a73e8;
  color: #fff;
}

/* System navigation */
.system-nav {
  position: relative;
  display: flex;
  justify-content: center;
  align-items: center;
  gap: 216px;
  height: 126px;
  padding-left: 15px;
  border-top: 3px solid #dcdcdc;
  background-color: #f4f4f4;
}
.system-nav path {
  fill: none;
  stroke: #8a8a8a;
  stroke-width: 4;
  stroke-linecap: round;
}
.system-nav .nav-tip {
  fill: #8a8a8a;
  stroke: none;
}
```
